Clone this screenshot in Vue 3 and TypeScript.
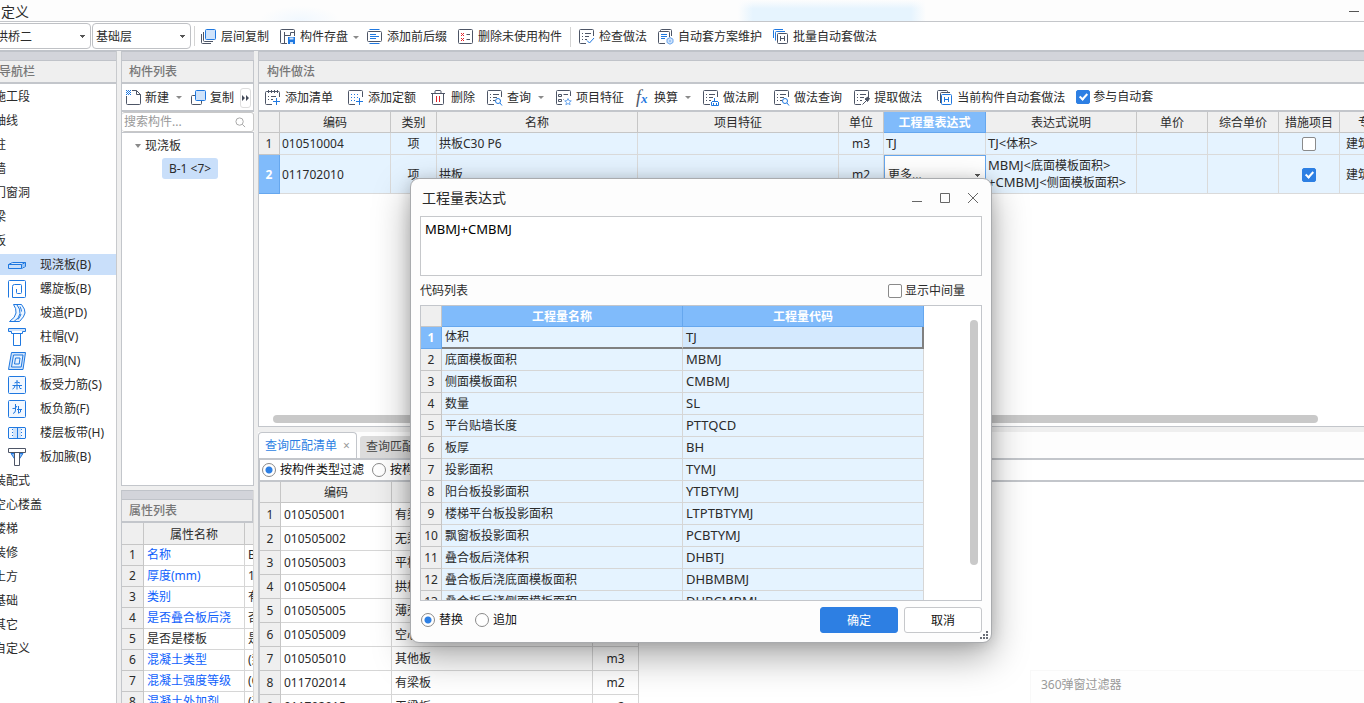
<script setup lang="ts">
import { ref } from 'vue'

type Shape = [d: string, stroke: string, fill?: string]

const D = '#4d5566'
const B = '#1f78e0'
const L = '#cfe3fb'
const M = '#6aa6ee'
const R = '#e0232b'
const N = 'none'

const sheet = 'M7 14.5H1.5a1 1 0 0 1-1-1v-12a1 1 0 0 1 1-1h12a1 1 0 0 1 1 1V7'
const rows = 'M3 4.5h1M6 4.5h6M3 7.5h1M6 7.5h4M3 10.5h1M6 10.5h2'

const icons: Record<string, Shape[]> = {
  layers: [['M5.5.5h8a1 1 0 0 1 1 1v8a1 1 0 0 1-1 1h-8a1 1 0 0 1-1-1v-8a1 1 0 0 1 1-1z', B, L], ['M2.5 3v8.5a1 1 0 0 0 1 1H12', D], ['M.5 5v8.5a1 1 0 0 0 1 1H10', D]],
  save: [['M7 14.5H1.5a1 1 0 0 1-1-1v-12a1 1 0 0 1 1-1h12a1 1 0 0 1 1 1V7', D], ['M4.5 3v11.5M4.5 6.5h6M10.5 6.5v-3H14', D], ['M8 8h7v7H8z', N, B], ['M9.5 8.5h4v2h-4zM10 13h3v2h-3z', N, L]],
  prefix: [['M2.5.5h10M2.5 14.5h10', B], ['M1.5 2.5h12a1 1 0 0 1 1 1v8a1 1 0 0 1-1 1h-12a1 1 0 0 1-1-1v-8a1 1 0 0 1 1-1z', D], ['M3 5.5h6M3 7.5h9M3 9.5h6', B]],
  unused: [['M1.5.5h12a1 1 0 0 1 1 1v12a1 1 0 0 1-1 1h-12a1 1 0 0 1-1-1v-12a1 1 0 0 1 1-1z', D], ['M3 4l3 3M6 4l-3 3M3 9l3 3M6 9l-3 3', R], ['M8.5 5.5H12M8.5 10.5H12', D]],
  check: [[sheet, D], [rows, D], ['M8 11.5l2.5 2.5 4.5-5', B]],
  plan: [['M2.5 3V1.5a1 1 0 0 1 1-1h9a1 1 0 0 1 1 1V7', D], ['M7 14.5H1.5a1 1 0 0 1-1-1V3.5a1 1 0 0 1 1-1h9a1 1 0 0 1 1 1V8', D], ['M3 5.5h6M3 7.5h6M3 9.5h4', B], ['M12 8.5l3 1.700v3.300l-3 1.700-3-1.700v-3.300z', M, L], ['M11 12h2', M]],
  batch: [['M.5 9V1.5a1 1 0 0 1 1-1H10', B], ['M2.5 11.5v-8a1 1 0 0 1 1-1H12', B], ['M5.5 4.5h8a1 1 0 0 1 1 1v8a1 1 0 0 1-1 1h-8a1 1 0 0 1-1-1v-8a1 1 0 0 1 1-1z', D], ['M7.5 7v5M11.5 7v5M7.5 9.5h4', D]],
  addlist: [['M7 14.5H1.5a1 1 0 0 1-1-1v-11a1 1 0 0 1 1-1h12a1 1 0 0 1 1 1V7', D], ['M3.5 0v3M6.5 0v3M9.5 0v3M12.5 0v3M3 6.5h1M6 6.5h5M3 9.5h1M6 9.5h2', D], ['M11.5 8v7M8 11.5h7', B]],
  addquota: [[sheet, D], ['M3 4.5h1M6 4.5h1M9 4.5h1M3 7.5h1M6 7.5h1M9 7.5h1M3 10.5h1M6 10.5h1M11.5 8v7M8 11.5h7', B]],
  trash: [['M0 3.5h14M4 3V1.5a1 1 0 0 1 1-1h4a1 1 0 0 1 1 1V3M1.5 4v9.5a1 1 0 0 0 1 1h9a1 1 0 0 0 1-1V4', D], ['M5.5 6v6M8.5 6v6', R]],
  query: [[sheet, D], [rows, D], ['M13.5 11a2.5 2.5 0 1 1-5 0a2.5 2.5 0 0 1 5 0zM13 13l2 2.5', B]],
  feature: [['M6 14.5H1.5a1 1 0 0 1-1-1v-12a1 1 0 0 1 1-1h12a1 1 0 0 1 1 1V6', D], ['M2.5 4.5h3v2h-3zM2.5 9.5h3v2h-3zM7.5 4.5H12M7.5 9.5H8', D], ['M12 8.5l1 2.200 2.300.2-1.800 1.500.6 2.300-2.100-1.200-2.100 1.200.6-2.300-1.800-1.500 2.300-.2z', M]],
  brush: [[sheet, D], [rows, D], ['M11.5 8v3M9 11.5h6M8.5 12v3.5h7V12M10.5 13v2M13.5 13v2', B]],
  pick: [[sheet, D], [rows, D], ['M8.5 14.5l4-4', D], ['M11 9l3-2 1.5 1.5-2 3z', D, D]],
  current: [['M2 10.5h-.5a1 1 0 0 1-1-1v-8a1 1 0 0 1 1-1h8a1 1 0 0 1 1 1V2M3.5 13V3.5a1 1 0 0 1 1-1H13', D], ['M5.5 4.5h8a1 1 0 0 1 1 1v8a1 1 0 0 1-1 1h-8a1 1 0 0 1-1-1v-8a1 1 0 0 1 1-1z', B], ['M7.5 7v5M11.5 7v5M7.5 9.5h4', B]],
  create: [['M6 .5h4.5l4 4v9a1 1 0 0 1-1 1h-12a1 1 0 0 1-1-1V6M10.5.5v4h4', D], ['M0 .5h1M2 .5h1M4 .5h1M1 1.5h1M3 1.5h1M0 2.5h1M2 2.5h1M4 2.5h1M1 3.5h1M3 3.5h1M0 4.5h1M2 4.5h1M4 4.5h1', B]],
  copy: [['M4 5.5H1.5a1 1 0 0 0-1 1v7a1 1 0 0 0 1 1h8a1 1 0 0 0 1-1V11', D], ['M5.5.5h8a1 1 0 0 1 1 1v8a1 1 0 0 1-1 1h-8a1 1 0 0 1-1-1v-8a1 1 0 0 1 1-1z', B, L]],
  slab: [['M.5 8.5l4-2h13v4l-4 2H.5zM.5 8.5h13l4-2M13.5 8.5v4', B], ['M5 7h10l-2 1H3z', N, L], ['M14 9l3-1.5v2.500L14 12z', N, '#9cc6f5']],
  spiral: [['M.5 17.5V1.5a1 1 0 0 1 1-1h15a1 1 0 0 1 1 1v15a1 1 0 0 1-1 1H4.5v-11a2 2 0 0 1 2-2h6a1 1 0 0 1 1 1v7a1 1 0 0 1-1 1H9.5a1 1 0 0 1-1-1V9', B]],
  ramp: [['M5.5.5h8q4 5 3.5 8.5t-5.5 8.500h-10q6-4 6.500-8.500T5.5.5z', B, '#eef6ff'], ['M9 1q3.5 4 3 8.500T6 17.5', B], ['M12 2.5q1.5 3 1.500 5M13 10q-1 3-3 5.500', B]],
  cap: [['M.5.5h17v3h-3v2h-11v-2h-3zM5.5 5.5h7v12h-7z', B], ['M1 1h16v2H1z', N, L]],
  hole: [['M3.5.5h14l-2.500 17H.5z', B, L], ['M5.5 3h9.500l-1.800 12H3.5z', B, '#e8f2fd'], ['M7.5 6h4.500l-.800 6H6.5z', B]],
  force: [['M1.5.5h15a1 1 0 0 1 1 1v15a1 1 0 0 1-1 1h-15a1 1 0 0 1-1-1v-15a1 1 0 0 1 1-1z', B, '#f1f7ff'], ['M9 4v9.500M6.5 7q2.500-2 5.500 0M4.5 9.5h9.500M7 9.5q0 2.500-2.500 3.500M11.5 9.5v2q0 1.500 2 1', B]],
  negative: [['M1.5.5h15a1 1 0 0 1 1 1v15a1 1 0 0 1-1 1h-15a1 1 0 0 1-1-1v-15a1 1 0 0 1 1-1z', B, '#f1f7ff'], ['M7.5 4v6q0 3-2.500 3.500M4.5 8.5q3 1 4.500-2.500M10.5 6v7.500M9 9.5h5M12.5 9.5v2.500q-1.500 1.500-2.500 0', B]],
  strip: [['M1 3.5h16a1 1 0 0 1 .5.500v10a1 1 0 0 1-.5.500H1a1 1 0 0 1-.5-.500V4a1 1 0 0 1 .5-.500z', B, '#f1f7ff'], ['M5 4h8v10H5z', N, L], ['M9.5 4v10', B], ['M4.5 5v1M4.5 8v1M4.5 11v1M13.5 5v1M13.5 8v1M13.5 11v1', B]],
  haunch: [['M3 5.5l4 6v-6zM15 5.5l-4 6v-6z', B, '#8ebcf3'], ['M.5.5h17v4H.5zM6.5 4.5h5v13h-5z', D, '#fff']],
}

interface Tool { icon: string; label: string; drop?: boolean; wide?: boolean; sep?: boolean }

const mainTools: Tool[] = [
  { icon: 'layers', label: '层间复制' },
  { icon: 'save', label: '构件存盘', drop: true },
  { icon: 'prefix', label: '添加前后缀' },
  { icon: 'unused', label: '删除未使用构件', sep: true },
  { icon: 'check', label: '检查做法' },
  { icon: 'plan', label: '自动套方案维护' },
  { icon: 'batch', label: '批量自动套做法' },
]

const methodTools: Tool[] = [
  { icon: 'addlist', label: '添加清单', wide: true },
  { icon: 'addquota', label: '添加定额', wide: true },
  { icon: 'trash', label: '删除' },
  { icon: 'query', label: '查询', drop: true },
  { icon: 'feature', label: '项目特征' },
  { icon: 'fx', label: '换算', drop: true },
  { icon: 'brush', label: '做法刷', wide: true },
  { icon: 'query', label: '做法查询' },
  { icon: 'pick', label: '提取做法', wide: true },
  { icon: 'current', label: '当前构件自动套做法' },
]

const navTop = ['施工段', '轴线', '柱', '墙', '门窗洞', '梁', '板']
const navSlab = [
  ['slab', '现浇板(B)'], ['spiral', '螺旋板(B)'], ['ramp', '坡道(PD)'], ['cap', '柱帽(V)'], ['hole', '板洞(N)'],
  ['force', '板受力筋(S)'], ['negative', '板负筋(F)'], ['strip', '楼层板带(H)'], ['haunch', '板加腋(B)'],
]
const navBottom = ['装配式', '空心楼盖', '楼梯', '装修', '土方', '基础', '其它', '自定义']

const props = [
  ['名称', 'B-1'], ['厚度(mm)', '120'], ['类别', '有梁板'], ['是否叠合板后浇', '否'], ['是否是楼板', '是'],
  ['混凝土类型', '(泵送)'], ['混凝土强度等级', '(C30)'], ['混凝土外加剂', '(无)'],
]

const matches = [
  ['010505001', '有梁板', 'm3'], ['010505002', '无梁板', 'm3'], ['010505003', '平板', 'm3'],
  ['010505004', '拱板', 'm3'], ['010505005', '薄壳板', 'm3'], ['010505009', '空心板', 'm3'],
  ['010505010', '其他板', 'm3'], ['011702014', '有梁板', 'm2'], ['011702015', '无梁板', 'm2'],
]

const codes = [
  ['体积', 'TJ'], ['底面模板面积', 'MBMJ'], ['侧面模板面积', 'CMBMJ'], ['数量', 'SL'], ['平台贴墙长度', 'PTTQCD'],
  ['板厚', 'BH'], ['投影面积', 'TYMJ'], ['阳台板投影面积', 'YTBTYMJ'], ['楼梯平台板投影面积', 'LTPTBTYMJ'],
  ['飘窗板投影面积', 'PCBTYMJ'], ['叠合板后浇体积', 'DHBTJ'], ['叠合板后浇底面模板面积', 'DHBMBMJ'],
  ['叠合板后浇侧面模板面积', 'DHBCMBMJ'],
]

const expression = ref('MBMJ+CMBMJ')
const autoApply = ref(true)
const measureA = ref(false)
const measureB = ref(true)
const showMiddle = ref(false)
const filterBy = ref('type')
const mode = ref('replace')
</script>

<template>
  <div class="app">
    <header class="titlebar">
      <h1>定义</h1>
      <button class="min" aria-label="最小化"></button>
    </header>

    <div class="toolbar">
      <select class="combo combo-project" aria-label="工程"><option>拱桥二</option></select>
      <select class="combo combo-floor" aria-label="楼层"><option>基础层</option></select>
      <span class="sep"></span>
      <div class="tools tools-main">
        <template v-for="t in mainTools" :key="t.label">
          <button class="tool" :class="{ drop: t.drop }">
            <svg class="icon" viewBox="0 0 16 16"><path v-for="(s, i) in icons[t.icon]" :key="i" :d="s[0]" :stroke="s[1]" :fill="s[2] ?? 'none'" /></svg>
            <span>{{ t.label }}</span>
            <i v-if="t.drop" class="caret"></i>
          </button>
          <span v-if="t.sep" class="sep sep-mid"></span>
        </template>
      </div>
    </div>

    <main class="work">
      <nav class="nav">
        <div class="strip"></div>
        <h2 class="caption caption-nav">导航栏</h2>
        <ul class="nav-list">
          <li v-for="n in navTop" :key="n" class="group">{{ n }}</li>
          <li v-for="(n, i) in navSlab" :key="n[1]" class="leaf" :class="{ on: i === 0 }">
            <svg class="nav-icon" viewBox="0 0 18 18"><path v-for="(s, k) in icons[n[0]]" :key="k" :d="s[0]" :stroke="s[1]" :fill="s[2] ?? 'none'" /></svg>
            <span>{{ n[1] }}</span>
          </li>
          <li v-for="n in navBottom" :key="n" class="group">{{ n }}</li>
        </ul>
      </nav>

      <div class="side">
        <section class="panel">
          <div class="strip"></div>
          <h2 class="caption">构件列表</h2>
          <div class="bar bar-side">
            <button class="tool drop">
              <svg class="icon" viewBox="0 0 16 16"><path v-for="(s, i) in icons.create" :key="i" :d="s[0]" :stroke="s[1]" :fill="s[2] ?? 'none'" /></svg>
              <span>新建</span><i class="caret"></i>
            </button>
            <button class="tool">
              <svg class="icon" viewBox="0 0 16 16"><path v-for="(s, i) in icons.copy" :key="i" :d="s[0]" :stroke="s[1]" :fill="s[2] ?? 'none'" /></svg>
              <span>复制</span>
            </button>
            <button class="more" aria-label="更多工具">
              <svg viewBox="0 0 8 6"><path d="M0 0l3 3-3 3zM4 0l3 3-3 3z" fill="#444b5a" /></svg>
            </button>
          </div>
          <label class="search">
            <input type="text" placeholder="搜索构件..." aria-label="搜索构件" />
            <svg viewBox="0 0 12 12"><circle cx="5" cy="5" r="4" /><path d="M8 8l3 3" /></svg>
          </label>
          <div class="tree">
            <div class="tree-root"><i class="caret caret-tree"></i>现浇板</div>
            <button class="tree-leaf">B-1 &lt;7&gt;</button>
          </div>
        </section>

        <section class="panel panel-props">
          <div class="strip"></div>
          <h2 class="caption">属性列表</h2>
          <div class="clip">
            <table class="grid grid-props">
              <colgroup><col class="w-22" /><col class="w-prop" /><col class="w-value" /></colgroup>
              <thead><tr><th></th><th>属性名称</th><th></th></tr></thead>
              <tbody>
                <tr v-for="(p, i) in props" :key="p[0]">
                  <th>{{ i + 1 }}</th>
                  <td :class="{ link: i !== 4 }">{{ p[0] }}</td>
                  <td>{{ p[1] }}</td>
                </tr>
              </tbody>
            </table>
          </div>
        </section>
      </div>

      <div class="content">
        <section class="panel panel-method">
          <div class="strip"></div>
          <h2 class="caption">构件做法</h2>
          <div class="bar bar-method">
            <div class="tools tools-method">
              <button v-for="t in methodTools" :key="t.label" class="tool" :class="{ drop: t.drop, wide: t.wide }">
                <span v-if="t.icon === 'fx'" class="fx"><em>f</em><em class="x">x</em></span>
                <svg v-else class="icon" viewBox="0 0 16 16"><path v-for="(s, i) in icons[t.icon]" :key="i" :d="s[0]" :stroke="s[1]" :fill="s[2] ?? 'none'" /></svg>
                <span>{{ t.label }}</span>
                <i v-if="t.drop" class="caret"></i>
              </button>
            </div>
            <label class="tick"><input v-model="autoApply" type="checkbox" />参与自动套</label>
          </div>
          <div class="clip clip-method">
            <table class="grid grid-method">
              <colgroup>
                <col class="w-num" /><col class="w-111" /><col class="w-46" /><col class="w-201" /><col class="w-201" /><col class="w-45" />
                <col class="w-102" /><col class="w-151" /><col class="w-71" /><col class="w-71" /><col class="w-61" /><col class="w-61" />
              </colgroup>
              <thead>
                <tr>
                  <th></th><th>编码</th><th>类别</th><th>名称</th><th>项目特征</th><th>单位</th>
                  <th class="hot">工程量表达式</th><th>表达式说明</th><th>单价</th><th>综合单价</th><th>措施项目</th><th>专业</th>
                </tr>
              </thead>
              <tbody>
                <tr>
                  <th>1</th><td>010510004</td><td class="mid">项</td><td>拱板C30 P6</td><td></td><td class="mid">m3</td>
                  <td class="code">TJ</td><td class="code">TJ&lt;<small>体积</small>&gt;</td><td></td><td></td>
                  <td class="mid"><input v-model="measureA" type="checkbox" aria-label="措施项目 1" /></td><td class="mid">建筑工程</td>
                </tr>
                <tr class="tall">
                  <th class="hot">2</th><td>011702010</td><td class="mid">项</td><td>拱板</td><td></td><td class="mid">m2</td>
                  <td class="edit"><select class="cell-select" aria-label="工程量表达式"><option>更多...</option></select></td>
                  <td class="code">MBMJ&lt;<small>底面模板面积</small>&gt;<br />+CMBMJ&lt;<small>侧面模板面积</small>&gt;</td>
                  <td></td><td></td>
                  <td class="mid"><input v-model="measureB" type="checkbox" aria-label="措施项目 2" /></td><td class="mid">建筑工程</td>
                </tr>
              </tbody>
            </table>
          </div>
          <div class="hscroll"></div>
        </section>

        <section class="panel-match">
          <div class="tabs">
            <button class="tab on">查询匹配清单<span class="tab-x">×</span></button>
            <button class="tab">查询匹配定额<span class="tab-x">×</span></button>
          </div>
          <div class="filters">
            <label><input v-model="filterBy" type="radio" name="filter" value="type" />按构件类型过滤</label>
            <label><input v-model="filterBy" type="radio" name="filter" value="prop" />按构件属性过滤</label>
          </div>
          <div class="clip">
            <table class="grid grid-match">
              <colgroup><col class="w-num" /><col class="w-111" /><col class="w-201" /><col class="w-46" /></colgroup>
              <thead><tr><th></th><th>编码</th><th>名称</th><th>单位</th></tr></thead>
              <tbody>
                <tr v-for="(m, i) in matches" :key="m[0]">
                  <th>{{ i + 1 }}</th><td>{{ m[0] }}</td><td>{{ m[1] }}</td><td class="mid">{{ m[2] }}</td>
                </tr>
              </tbody>
            </table>
          </div>
        </section>
      </div>
    </main>

    <aside class="toast">360弹窗过滤器</aside>

    <section class="dialog" role="dialog" aria-labelledby="dlg-title">
      <header class="dlg-head">
        <h2 id="dlg-title">工程量表达式</h2>
        <div class="dlg-buttons">
          <button aria-label="最小化"><svg viewBox="0 0 12 12"><path d="M1 9.5h10" /></svg></button>
          <button aria-label="最大化"><svg viewBox="0 0 12 12"><path d="M1.5 1.5h9v9h-9z" /></svg></button>
          <button aria-label="关闭"><svg viewBox="0 0 12 12"><path d="M1 1l10 10M11 1L1 11" /></svg></button>
        </div>
      </header>
      <textarea v-model="expression" aria-label="表达式"></textarea>
      <div class="dlg-line">
        <span>代码列表</span>
        <label class="tick"><input v-model="showMiddle" type="checkbox" />显示中间量</label>
      </div>
      <div class="code-box">
        <table class="grid grid-code">
          <colgroup><col class="w-num" /><col class="w-241" /><col class="w-241" /></colgroup>
          <thead><tr><th></th><th class="hot">工程量名称</th><th class="hot">工程量代码</th></tr></thead>
          <tbody>
            <tr v-for="(c, i) in codes" :key="c[1]" :class="{ active: i === 0 }">
              <th :class="{ hot: i === 0 }">{{ i + 1 }}</th><td>{{ c[0] }}</td><td class="code">{{ c[1] }}</td>
            </tr>
          </tbody>
        </table>
        <div class="vscroll"></div>
      </div>
      <footer class="dlg-foot">
        <label><input v-model="mode" type="radio" name="mode" value="replace" />替换</label>
        <label><input v-model="mode" type="radio" name="mode" value="append" />追加</label>
        <span class="grow"></span>
        <button class="btn primary">确定</button>
        <button class="btn">取消</button>
      </footer>
      <svg class="grip" viewBox="0 0 8 8"><path d="M6 0h2v2H6zM3 3h2v2H3zM6 3h2v2H6zM0 6h2v2H0zM3 6h2v2H3zM6 6h2v2H6z" fill="#6b6f78" /></svg>
    </section>
  </div>
</template>

<style>
body { margin: 0; overflow: hidden; }
</style>

<style scoped>
.app { position: relative; display: flex; flex-direction: column; height: 100vh; overflow: hidden; background: #efefef; color: #2b2b2b; font-family: "Noto Sans", "Noto Sans CJK SC", sans-serif; font-size: 12px; line-height: 16px; }
.app *, .app *::after { box-sizing: border-box; }
button, input, select, textarea { font: inherit; color: inherit; margin: 0; }
button { background: none; border: 0; padding: 0; white-space: nowrap; }
h1, h2 { margin: 0; font-weight: 400; }

.titlebar { flex: none; display: flex; align-items: center; height: 22px; padding: 2px 0 0 1px; border-bottom: 1px solid #c4c6ca; background: linear-gradient(90deg, #fdfdfd, transparent 8%, transparent 92%, #fdfdfd) no-repeat 738px 0 / 188px 22px, linear-gradient(#fdfdfd, #e6f4fe 40%) no-repeat 738px 0 / 188px 22px, radial-gradient(ellipse 40px 14px at 300px 20px, #f1f8ff, transparent), #fdfdfd; }
.titlebar h1 { flex: 1; font-size: 14px; }
.min { width: 10px; height: 1px; margin-right: 5px; background: #555; }

.toolbar { flex: none; display: flex; align-items: center; height: 29px; border-bottom: 1px solid #c0c3c9; background: #fff; }
.combo { appearance: none; flex: none; height: 26px; margin-right: 1px; border: 1px solid #bfc1c5; border-radius: 4px; outline: 0; background: linear-gradient(#555, #555) no-repeat right 5px top 11px / 5px 1px, linear-gradient(#555, #555) no-repeat right 6px top 12px / 3px 1px, linear-gradient(#555, #555) no-repeat right 7px top 13px / 1px 1px, #fff; padding: 1px 3px 0; }
.combo-project { width: 97px; margin-left: -6px; padding-left: 1px; }
.combo-floor { width: 99px; }
.sep { flex: none; width: 1px; height: 20px; margin-left: 2px; background: #d4d4d4; }
.tools { display: flex; align-items: center; }
.tools-main { gap: 11px; margin-left: 6px; padding-top: 2px; }
.sep-mid { margin: 0 -3px; }
.tool { display: flex; align-items: center; gap: 5px; }
.icon { flex: none; width: 16px; height: 16px; margin-right: -1px; }
.icon path, .nav-icon path { stroke-width: 1; }
.caret { flex: none; width: 0; height: 0; border: 3px solid transparent; border-top-color: #8a8a8a; border-bottom: 0; }
.tools-main .drop { margin-right: -3px; }

.work { flex: 1; display: flex; min-height: 0; }
.strip { flex: none; height: 10px; border-top: 1px solid #c0c3c9; border-bottom: 1px solid #c0c3c9; background: #d3d4da; }
.caption { flex: none; height: 23px; padding: 0 8px; border-bottom: 2px solid #c3c6cb; background: #efefef; color: #777; font-size: 12px; line-height: 21px; font-weight: 500; }
.caption-nav { padding-left: 0; margin-left: -1px; }

.nav { flex: none; display: flex; flex-direction: column; width: 117px; border-right: 1px solid #c8cacd; background: #fff; overflow: hidden; }
.nav-list { display: flex; flex-direction: column; gap: 3px; list-style: none; margin: 0; padding: 2px 0 0; line-height: 21px; white-space: nowrap; }
.nav-list li { flex: none; height: 21px; }
.nav-list li.leaf { display: flex; align-items: center; gap: 14px; padding-left: 8px; }
.nav-list li.group { margin-left: -6px; }
.nav-list li.on { background: #c9dffa; }
.nav-icon { flex: none; width: 18px; height: 18px; }

.side { flex: none; display: flex; flex-direction: column; gap: 4px; width: 133px; margin-left: 4px; }
.panel { display: flex; flex-direction: column; min-height: 0; border-left: 1px solid #c3c6cb; background: #fff; }
.side .panel { flex: 435 1 0; }
.side .panel-props { flex: 213 1 0; border-right: 1px solid #dadada; }
.side .caption { padding: 0 7px; border-right: 1px solid #c3c6cb; }
.bar { flex: none; display: flex; align-items: center; height: 28px; padding-top: 1px; border-bottom: 2px solid #c3c6cb; background: #fff; overflow: hidden; }
.bar-side { gap: 9px; padding-left: 4px; border-right: 1px solid #c3c6cb; }
.bar-side .tool { gap: 4px; }
.bar-side .caret { margin-left: 3px; }
.more { flex: none; display: grid; place-items: center; width: 11px; height: 20px; margin: 0 0 0 -3px; border: 1px solid #dedede; border-radius: 3px; }
.more svg { width: 8px; height: 6px; }
.search { flex: none; display: flex; align-items: center; height: 20px; padding: 0 7px 0 2px; border: 1px solid #c8c8c8; border-left: 0; border-radius: 3px; }
.search input { flex: 1; min-width: 0; height: 16px; padding: 0; border: 0; outline: 0; background: none; }
.search input::placeholder { color: #999; opacity: 1; }
.search svg { width: 11px; height: 11px; fill: none; stroke: #a2a2a2; }
.tree { flex: 1; border: solid #c3c6cb; border-width: 1px 1px 1px 0; }
.tree-root { display: flex; align-items: center; height: 25px; padding-left: 10px; }
.caret-tree { margin: 0 4px 0 3px; border-top-width: 4px; }
.tree-leaf { min-width: 56px; height: 21px; margin-left: 40px; border-radius: 3px; background: #c9dffa; }

.clip { flex: 1; min-height: 0; overflow: hidden; background: #fff; }
.grid { table-layout: fixed; border-collapse: separate; border-spacing: 0; }
.grid th, .grid td { height: 22px; padding: 0; border: solid #d6d6d6; border-width: 0 1px 1px 0; overflow: hidden; white-space: nowrap; font-weight: 400; line-height: 16px; vertical-align: middle; text-align: left; }
.grid th { border-color: #c6c6c6; background: #efefef; text-align: center; }
.grid thead th { height: 21px; padding-top: 2px; }
.grid td { padding-left: 2px; }
.grid td.mid { padding: 0; text-align: center; }
.grid th.hot { background: #80bbfb; border-color: #66a7ee; color: #fff; font-weight: 700; }
.grid td.code { padding-bottom: 1px; font-size: 13px; }
.code small { font-size: 12px; }
.w-num { width: 21px; } .w-22 { width: 22px; } .w-45 { width: 45px; } .w-46 { width: 46px; } .w-61 { width: 61px; } .w-71 { width: 71px; } .w-102 { width: 102px; }
.w-111 { width: 111px; } .w-151 { width: 151px; } .w-201 { width: 201px; } .w-241 { width: 241px; } .w-prop { width: 101px; } .w-value { width: 60px; }

.grid-props { width: 183px; }
.grid-props td, .grid-props tbody th { height: 21px; padding-left: 3px; }
.grid-props thead th { height: 22px; }
.grid-props tbody th { padding: 0; }
.grid td.link { color: #0f5ffc; }

.content { flex: 1; min-width: 0; display: flex; flex-direction: column; margin-left: 4px; }
.panel-method { flex: 376 1 0; border-bottom: 1px solid #c3c6cb; }
.bar-method { padding-left: 6px; }
.tools-method { gap: 12px; }
.tool.wide { margin-right: 3px; }
.tools-method .caret { margin-left: 2px; }
.tools-method .fx { width: 14px; margin-right: -1px; display: flex; align-items: baseline; font-family: "Liberation Serif", serif; font-size: 18px; color: #4d5566; }
.fx .x { font-size: 13px; font-weight: 700; color: #1f78e0; }
.tick { display: flex; align-items: center; gap: 3px; white-space: nowrap; }
.bar-method .tick { margin: 0 0 2px 11px; }
input[type="checkbox"] { appearance: none; flex: none; display: inline-block; width: 14px; height: 14px; border: 1px solid #8a8a8a; border-radius: 2px; background: #fff; vertical-align: middle; }
.grid input[type="checkbox"] { display: block; margin: 0 auto; }
input[type="checkbox"]:checked { border-color: #2d7fe3; background: #2d7fe3; }
input[type="checkbox"]:checked::after { content: ""; display: block; width: 5px; height: 8px; margin: 1px 0 0 4px; border: solid #fff; border-width: 0 2px 2px 0; transform: rotate(42deg); }
.grid-method { width: 1142px; }
.grid-method td { background: #e5f3ff; border-color: #dadada; }
.grid-method .tall td, .grid-method .tall th { height: 39px; padding-top: 1px; }
.grid-method .tall .code { line-height: 17px; }
.grid-method .tall td.edit { padding: 0; border-color: #66a7ee; background: #fff; }
.cell-select { appearance: none; display: block; width: 100%; height: 38px; padding: 0 3px; border: solid #66a7ee; border-width: 1px 0 0 1px; border-radius: 0; outline: 0; background: linear-gradient(#555, #555) no-repeat right 5px top 18px / 5px 1px, linear-gradient(#555, #555) no-repeat right 6px top 19px / 3px 1px, linear-gradient(#555, #555) no-repeat right 7px top 20px / 1px 1px, #fff; }
.hscroll { flex: none; height: 8px; margin: 0 46px 3px 14px; border-radius: 4px; background: #c9c9c9; }

.panel-match { flex: 271 1 0; display: flex; flex-direction: column; min-height: 0; margin-top: 5px; border-left: 2px solid #c3c6cb; background: #fff; }
.tabs { flex: none; display: flex; align-items: flex-end; gap: 3px; height: 28px; margin-left: -2px; border-bottom: 2px solid #c3c6cb; background: #fdfdfd; }
.tab { display: flex; align-items: center; height: 22px; padding: 0 6px; background: #dcdcdc; border-radius: 3px 3px 0 0; color: #444; }
.tab.on { height: 26px; border: 1px solid #c3c6cb; border-bottom: 0; border-radius: 4px 4px 0 0; background: #fff; color: #2d7fe3; }
.tab-x { margin-left: 6px; color: #999; }
.filters { flex: none; display: flex; align-items: center; gap: 8px; height: 22px; padding-left: 2px; border-bottom: 2px solid #c3c6cb; color: #111; }
.filters label, .dlg-foot label { display: flex; align-items: center; gap: 4px; white-space: nowrap; color: #111; }
input[type="radio"] { appearance: none; flex: none; width: 14px; height: 14px; border: 1px solid #8a8a8a; border-radius: 50%; background: #fff; }
input[type="radio"]:checked { background: radial-gradient(circle, #2d7fe3 0 3px, #fff 4px); }
.grid-match { width: 379px; }
.grid-match tbody th, .grid-match td { height: 24px; padding-left: 3px; }
.grid-match tbody th { padding: 0; }

.toast { position: absolute; right: 0; bottom: 0; width: 334px; height: 33px; padding: 6px 0 0 10px; border: solid #f8f8f8; border-width: 1px 0 0 1px; background: #fefefe; color: #9a9a9a; }

.dialog { position: absolute; left: 410px; top: 178px; display: flex; flex-direction: column; width: 582px; height: 465px; padding: 0 9px; border: 1px solid #a9abae; border-radius: 9px; background: #fdfdfd; box-shadow: 0 14px 36px rgba(0, 0, 0, .34), 0 1px 14px rgba(0, 0, 0, .14); }
.dlg-head { flex: none; display: flex; align-items: center; justify-content: space-between; height: 37px; padding: 0 3px 0 2px; }
.dlg-head h2 { font-size: 14px; }
.dlg-buttons { display: flex; gap: 16px; }
.dlg-buttons button, .dlg-buttons svg { display: block; width: 12px; height: 12px; }
.dlg-buttons svg { fill: none; stroke: #666; }
textarea { flex: none; height: 60px; padding: 3px 4px; border: 1px solid #c6c8cb; border-radius: 0; outline: 0; resize: none; background: #fff; font-size: 13px; line-height: 18px; }
.dialog textarea { color: #000; }
.dlg-line { flex: none; display: flex; align-items: center; justify-content: space-between; height: 29px; padding-right: 17px; }
.code-box { flex: 1; min-height: 0; display: flex; justify-content: space-between; align-items: flex-start; border: 1px solid #c3c6cb; background: #fff; overflow: hidden; }
.grid-code { width: 503px; }
.grid-code td { padding-left: 3px; background: #e5f3ff; }
.grid-code td.code { padding-left: 3px; }
.grid-code .active td { border-bottom: 2px solid #808080; }
.grid-code .active td.code { border-right: 2px solid #808080; background: #d4e9fe; }
.vscroll { width: 8px; height: 245px; margin: 14px 3px 0 0; border-radius: 4px; background: #c9c9c9; }
.dlg-foot { flex: none; display: flex; align-items: center; gap: 12px; height: 41px; padding: 0 0 3px 1px; }
.grow { flex: 1; }
.btn { width: 78px; height: 26px; margin-left: -6px; padding-top: 1px; border: 1px solid #c6c8cb; border-radius: 3px; background: #fff; color: #111; }
.btn.primary { margin: 0; border-color: #2d7fe3; background: #2d7fe3; color: #fff; }
.grip { position: absolute; right: 3px; bottom: 3px; width: 8px; height: 8px; }
</style>
